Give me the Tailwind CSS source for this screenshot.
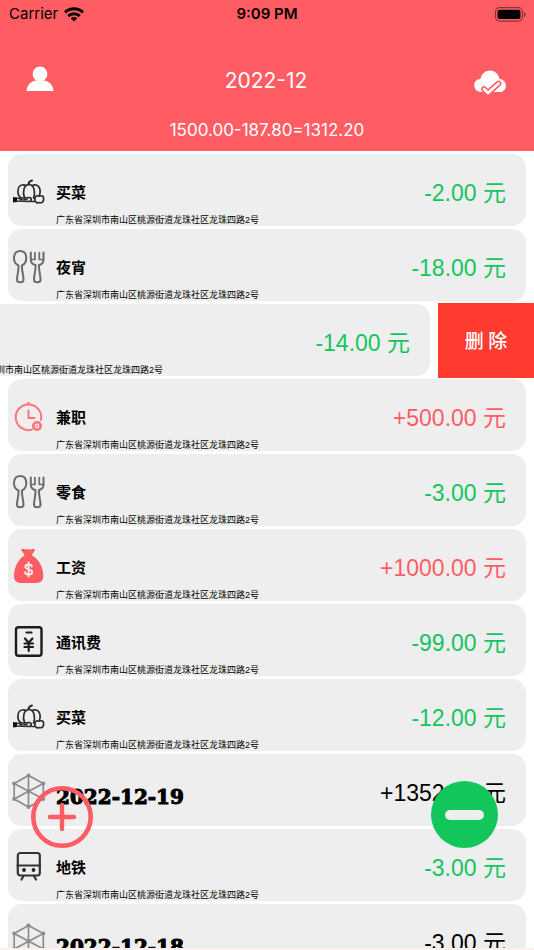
<!DOCTYPE html>
<html lang="zh-CN">
<head>
<meta charset="utf-8">
<meta name="viewport" content="width=device-width, initial-scale=1">
<title>账本 2022-12</title>
<script src="https://cdn.jsdelivr.net/npm/@tailwindcss/browser@4"></script>
</head>
<body class="h-screen overflow-hidden bg-white flex flex-col text-black font-['Liberation_Sans','Noto_Sans_CJK_SC',sans-serif]">

<svg class="hidden" aria-hidden="true">
  <symbol id="veg" viewBox="0 0 34 36">
    <g fill="none" stroke="#2c2c2c" stroke-width="1.700" stroke-linecap="round" stroke-linejoin="round">
      <path d="M9 24.500C5 23 4.500 13 10 12C12 11.500 13 12 14 13M12.500 24.500C10.500 20 11.500 11.500 17 11.500S23.500 20 21.500 25M20 13C21 12 22 11.500 24 12C28 13 29 18 27.500 22"/>
      <path d="M16.500 11.500C16.500 9.500 18 8 20 7.500" stroke-width="2"/>
      <path d="M4 25.500L17 24.500C20 24.500 20 28.500 17 28.500L4 28Z M8 26.500h2M12 26.500h3" stroke-width="1.700"/>
      <path d="M24.500 23C26 22.500 26.500 23.500 28 23C31 22 32 24 31.500 27C31 30 29 30 27.500 29.500C25 30.500 23.500 29 23 27.500C22.500 25 23 23.500 24.500 23ZM20 28.500h3"/>
    </g>
    <path d="M1 24l4 .5v4.500l-4 .5z" fill="#111"/>
  </symbol>
  <symbol id="meal" viewBox="0 0 34 36">
    <g fill="none" stroke="#6b6b6b" stroke-width="2" stroke-linecap="round" stroke-linejoin="round">
      <path d="M6.500 17.500C0 14.500 .5 3 8.200 3S16 14.500 10 17.500C9.500 22 11.500 27 11.500 31.500C11.500 35.300 5 35.300 5 31.500C5 27 7 22 6.500 17.500Z"/>
      <path d="M18.800 4.500V11.500C18.800 15 21 16.500 23.500 17C24 22 22 27 22 31.500C22 35.300 28.500 35.300 28.500 31.500C28.500 27 26.500 22 27 17C29.500 16.500 31.500 15 31.500 11.500V4.500"/>
      <path d="M22.900 4.500V11.500M27.300 4.500V11.500M19 11.500H22.900M27.300 11.500H31.500" stroke-width="1.700"/>
    </g>
  </symbol>
  <symbol id="clock" viewBox="0 0 34 36">
    <g fill="none" stroke="#ff747b" stroke-width="2" stroke-linecap="round">
      <path d="M29 22A12.800 12.800 0 1 0 20 31.600"/>
      <path d="M16.500 12.500V20H22.500"/>
      <circle cx="25" cy="28" r="3.700" stroke-width="2.600"/>
      <path d="M25 27.500v1" stroke-width="1.500"/>
    </g>
    <path d="M13.500 7L16.500 3.500L19.500 7Z" fill="#ff747b"/>
  </symbol>
  <symbol id="bag" viewBox="0 0 34 36">
    <path d="M9 1.500C11 -.5 13 2.500 16 1C19 2.500 20.500 0 23 1.500C22.500 4 20.500 5 20 7.500C27 11 31.500 20 31.300 28C31.300 33 28 35 24 35H9C5 35 2 33 2 28C2 20 6 11 12.500 7.500C12 5 10 4 9 1.500Z" fill="#ff5d63"/>
    <path d="M19.800 18.500C19.500 15.800 13.500 15.800 13.300 18.800C13.300 22 20.200 20.800 20.200 24.200C20 27.300 13.300 27.300 13 24.200M16.600 14.300V28.500" fill="none" stroke="#f2e9e9" stroke-width="1.900" stroke-linecap="round"/>
  </symbol>
  <symbol id="phone" viewBox="0 0 34 36">
    <g fill="none" stroke="#1c1c1c" stroke-width="2.400" stroke-linecap="round" stroke-linejoin="round">
      <rect x="4" y="4.300" width="25.500" height="28.500" rx="2.500"/>
      <path d="M14.500 9.500h5M13 15.500l3.700 4.300l3.700-4.300M12.500 20.500h8.500M12.500 24h8.500M16.700 20V28" stroke-width="2.200"/>
    </g>
  </symbol>
  <symbol id="cube" viewBox="0 0 34 36">
    <g fill="none" stroke="#8c8c8c" stroke-width="1.700">
      <path d="M16.500 2.500L31.300 10.500V26L16.500 34L2.200 26V10.500ZM16.500 2.500V34M2.200 10.500L31.300 26M31.300 10.500L2.200 26"/>
    </g>
    <g fill="#8c8c8c">
      <circle cx="16.500" cy="2.500" r="2"/><circle cx="31.300" cy="10.500" r="2"/><circle cx="31.300" cy="26" r="2"/>
      <circle cx="16.500" cy="34" r="2"/><circle cx="2.200" cy="26" r="2"/><circle cx="2.200" cy="10.500" r="2"/><circle cx="16.500" cy="18.300" r="2"/>
    </g>
  </symbol>
  <symbol id="train" viewBox="0 0 34 36">
    <g fill="none" stroke="#333" stroke-width="2.200" stroke-linecap="round" stroke-linejoin="round">
      <rect x="5.800" y="5" width="22" height="22.500" rx="2.500"/>
      <path d="M5.500 17.500h22.500M11.500 28L9.500 31.500M22 28L24 31.500"/>
    </g>
    <circle cx="12" cy="22" r="1.900" fill="#222"/><circle cx="21.500" cy="22" r="1.900" fill="#222"/>
  </symbol>
</svg>

<header class="h-[151px] shrink-0 bg-[#ff5d63] flex flex-col">
  <div class="h-7 px-2 grid grid-cols-3 items-center font-[Inter,sans-serif] text-[15px]">
    <div class="flex items-center gap-1.5 pl-px">
      <span>Carrier</span>
      <svg class="w-5 h-[15px]" viewBox="0 0 20 15" fill="none" stroke="#000" stroke-width="3" role="img" aria-label="Wi-Fi">
        <path d="M1 5.300C6 .6 14 .6 19 5.300M4.200 9C7.500 6 12.500 6 15.800 9"/>
        <path d="M10 14.500L6.700 11.300C8.500 9.700 11.500 9.700 13.300 11.300Z" fill="#000" stroke="none"/>
      </svg>
    </div>
    <span class="text-center font-semibold">9:09 PM</span>
    <svg class="w-8 h-[15px] justify-self-end" viewBox="0 0 32 15" role="img" aria-label="电量">
      <rect x="1.500" y=".7" width="27" height="13.400" rx="4" fill="none" stroke="#000" stroke-opacity=".45" stroke-width="1.200"/>
      <rect x="3.500" y="2.700" width="23" height="9.400" rx="2" fill="#000"/>
      <path d="M30 5v5c2-.8 2-4.200 0-5z" fill="#000" fill-opacity=".5"/>
    </svg>
  </div>
  <div class="h-[87px] pl-[26px] pr-7 pt-[18px] flex items-center justify-between text-white">
    <button type="button" class="w-8 h-7 mb-1" aria-label="我的">
      <svg class="w-7 h-[26px]" viewBox="0 0 28 26" fill="#fff"><circle cx="14" cy="8" r="7.400"/><path d="M.5 25C1 18 6 15 10 14.500H18C22 15 27 18 27.500 25Z"/></svg>
    </button>
    <h1 class="font-[Inter,sans-serif] text-[21px] leading-7">2022-12</h1>
    <button type="button" class="w-8 h-7 mt-1" aria-label="云同步">
      <svg class="w-8 h-7" viewBox="0 0 32 28">
        <path d="M7.500 23C-2 23-2 10 6.500 10C8.500-1.500 23.500-1.500 25.500 10C34 10.500 34 23 25.500 23Z" fill="#fff"/>
        <path d="M10 20L14 24L24.500 14.500" fill="none" stroke="#ff5d63" stroke-width="5.800" stroke-linecap="round" stroke-linejoin="round"/>
        <path d="M10 20L14 24L24.500 14.500" fill="none" stroke="#fff" stroke-width="2.800" stroke-linecap="round" stroke-linejoin="round"/>
      </svg>
    </button>
  </div>
  <p class="pt-[3px] text-center text-white font-[Inter,sans-serif] text-[17px] leading-6">1500.00-187.80=1312.20</p>
</header>

<main class="flex-1 min-h-0 overflow-hidden pt-0.5">
<ul>
  <li class="px-2 pt-px pb-0.5">
    <article class="h-[72px] rounded-[14px] bg-[#eee] flex items-start pl-1 pr-5">
      <svg class="w-[34px] h-9 mt-[19px] shrink-0"><use href="#veg"/></svg>
      <div class="flex-1 pl-2.5 pt-[27px]"><h2 class="text-[15px] leading-6 font-bold">买菜</h2><p class="mt-[9px] text-[9px] leading-3 whitespace-nowrap">广东省深圳市南山区桃源街道龙珠社区龙珠四路2号</p></div>
      <p class="pt-[23px] text-[23px] leading-8 text-[#13c65c]">-2.00 元</p>
    </article>
  </li>
  <li class="px-2 pt-px pb-0.5">
    <article class="h-[72px] rounded-[14px] bg-[#eee] flex items-start pl-1 pr-5">
      <svg class="w-[34px] h-9 mt-[19px] shrink-0"><use href="#meal"/></svg>
      <div class="flex-1 pl-2.5 pt-[27px]"><h2 class="text-[15px] leading-6 font-bold">夜宵</h2><p class="mt-[9px] text-[9px] leading-3 whitespace-nowrap">广东省深圳市南山区桃源街道龙珠社区龙珠四路2号</p></div>
      <p class="pt-[23px] text-[23px] leading-8 text-[#13c65c]">-18.00 元</p>
    </article>
  </li>
  <li class="flex overflow-hidden">
    <div class="w-full shrink-0 -ml-24 px-2 pt-px pb-0.5">
      <article class="h-[72px] rounded-[14px] bg-[#eee] flex items-start pl-1 pr-5">
        <div class="flex-1 pl-11 pt-[60px]"><p class="text-[9px] leading-3 whitespace-nowrap">广东省深圳市南山区桃源街道龙珠社区龙珠四路2号</p></div>
        <p class="pt-[23px] text-[23px] leading-8 text-[#13c65c]">-14.00 元</p>
      </article>
    </div>
    <button type="button" class="w-24 shrink-0 bg-[#ff3b30] text-white text-[19px] font-medium font-['Noto_Sans_CJK_SC',sans-serif]">删 除</button>
  </li>
  <li class="px-2 pt-px pb-0.5">
    <article class="h-[72px] rounded-[14px] bg-[#eee] flex items-start pl-1 pr-5">
      <svg class="w-[34px] h-9 mt-[19px] shrink-0"><use href="#clock"/></svg>
      <div class="flex-1 pl-2.5 pt-[27px]"><h2 class="text-[15px] leading-6 font-bold">兼职</h2><p class="mt-[9px] text-[9px] leading-3 whitespace-nowrap">广东省深圳市南山区桃源街道龙珠社区龙珠四路2号</p></div>
      <p class="pt-[23px] text-[23px] leading-8 text-[#ff5d63]">+500.00 元</p>
    </article>
  </li>
  <li class="px-2 pt-px pb-0.5">
    <article class="h-[72px] rounded-[14px] bg-[#eee] flex items-start pl-1 pr-5">
      <svg class="w-[34px] h-9 mt-[19px] shrink-0"><use href="#meal"/></svg>
      <div class="flex-1 pl-2.5 pt-[27px]"><h2 class="text-[15px] leading-6 font-bold">零食</h2><p class="mt-[9px] text-[9px] leading-3 whitespace-nowrap">广东省深圳市南山区桃源街道龙珠社区龙珠四路2号</p></div>
      <p class="pt-[23px] text-[23px] leading-8 text-[#13c65c]">-3.00 元</p>
    </article>
  </li>
  <li class="px-2 pt-px pb-0.5">
    <article class="h-[72px] rounded-[14px] bg-[#eee] flex items-start pl-1 pr-5">
      <svg class="w-[34px] h-9 mt-[19px] shrink-0"><use href="#bag"/></svg>
      <div class="flex-1 pl-2.5 pt-[27px]"><h2 class="text-[15px] leading-6 font-bold">工资</h2><p class="mt-[9px] text-[9px] leading-3 whitespace-nowrap">广东省深圳市南山区桃源街道龙珠社区龙珠四路2号</p></div>
      <p class="pt-[23px] text-[23px] leading-8 text-[#ff5d63]">+1000.00 元</p>
    </article>
  </li>
  <li class="px-2 pt-px pb-0.5">
    <article class="h-[72px] rounded-[14px] bg-[#eee] flex items-start pl-1 pr-5">
      <svg class="w-[34px] h-9 mt-[19px] shrink-0"><use href="#phone"/></svg>
      <div class="flex-1 pl-2.5 pt-[27px]"><h2 class="text-[15px] leading-6 font-bold">通讯费</h2><p class="mt-[9px] text-[9px] leading-3 whitespace-nowrap">广东省深圳市南山区桃源街道龙珠社区龙珠四路2号</p></div>
      <p class="pt-[23px] text-[23px] leading-8 text-[#13c65c]">-99.00 元</p>
    </article>
  </li>
  <li class="px-2 pt-px pb-0.5">
    <article class="h-[72px] rounded-[14px] bg-[#eee] flex items-start pl-1 pr-5">
      <svg class="w-[34px] h-9 mt-[19px] shrink-0"><use href="#veg"/></svg>
      <div class="flex-1 pl-2.5 pt-[27px]"><h2 class="text-[15px] leading-6 font-bold">买菜</h2><p class="mt-[9px] text-[9px] leading-3 whitespace-nowrap">广东省深圳市南山区桃源街道龙珠社区龙珠四路2号</p></div>
      <p class="pt-[23px] text-[23px] leading-8 text-[#13c65c]">-12.00 元</p>
    </article>
  </li>
  <li class="px-2 pt-px pb-0.5">
    <article class="h-[72px] rounded-[14px] bg-[#eee] flex items-start pl-1 pr-5">
      <svg class="w-[34px] h-9 mt-[19px] shrink-0"><use href="#cube"/></svg>
      <h2 class="flex-1 pl-2.5 pt-[31px] text-[20px] leading-6 font-bold [-webkit-text-stroke:1px_#000] font-['DejaVu_Serif',serif]">2022-12-19</h2>
      <p class="pt-[23px] text-[23px] leading-8">+1352.20 元</p>
    </article>
  </li>
  <li class="px-2 pt-px pb-0.5">
    <article class="h-[72px] rounded-[14px] bg-[#eee] flex items-start pl-1 pr-5">
      <svg class="w-[34px] h-9 mt-[19px] shrink-0"><use href="#train"/></svg>
      <div class="flex-1 pl-2.5 pt-[27px]"><h2 class="text-[15px] leading-6 font-bold">地铁</h2><p class="mt-[9px] text-[9px] leading-3 whitespace-nowrap">广东省深圳市南山区桃源街道龙珠社区龙珠四路2号</p></div>
      <p class="pt-[23px] text-[23px] leading-8 text-[#13c65c]">-3.00 元</p>
    </article>
  </li>
  <li class="px-2 pt-px pb-0.5">
    <article class="h-[72px] rounded-[14px] bg-[#eee] flex items-start pl-1 pr-5">
      <svg class="w-[34px] h-9 mt-[19px] shrink-0"><use href="#cube"/></svg>
      <h2 class="flex-1 pl-2.5 pt-[31px] text-[20px] leading-6 font-bold [-webkit-text-stroke:1px_#000] font-['DejaVu_Serif',serif]">2022-12-18</h2>
      <p class="pt-[23px] text-[23px] leading-8">-3.00 元</p>
    </article>
  </li>
</ul>
</main>
<footer class="h-0.5 shrink-0 bg-[#ffefef]"></footer>

<button type="button" aria-label="记收入" class="fixed left-[31px] bottom-[102px] size-[62px]">
  <svg class="size-full" viewBox="0 0 62 62" fill="none" stroke="#ff5d63" stroke-linecap="round"><circle cx="31" cy="31" r="28.700" stroke-width="4.600"/><path d="M31 19V43M19 31H43" stroke-width="4.400"/></svg>
</button>
<button type="button" aria-label="记支出" class="fixed right-9 bottom-[102px] size-[67px] rounded-full bg-[#13c65c] flex items-center justify-center">
  <span class="w-[39px] h-2.5 rounded-full bg-[#eee]"></span>
</button>
</body>
</html>
